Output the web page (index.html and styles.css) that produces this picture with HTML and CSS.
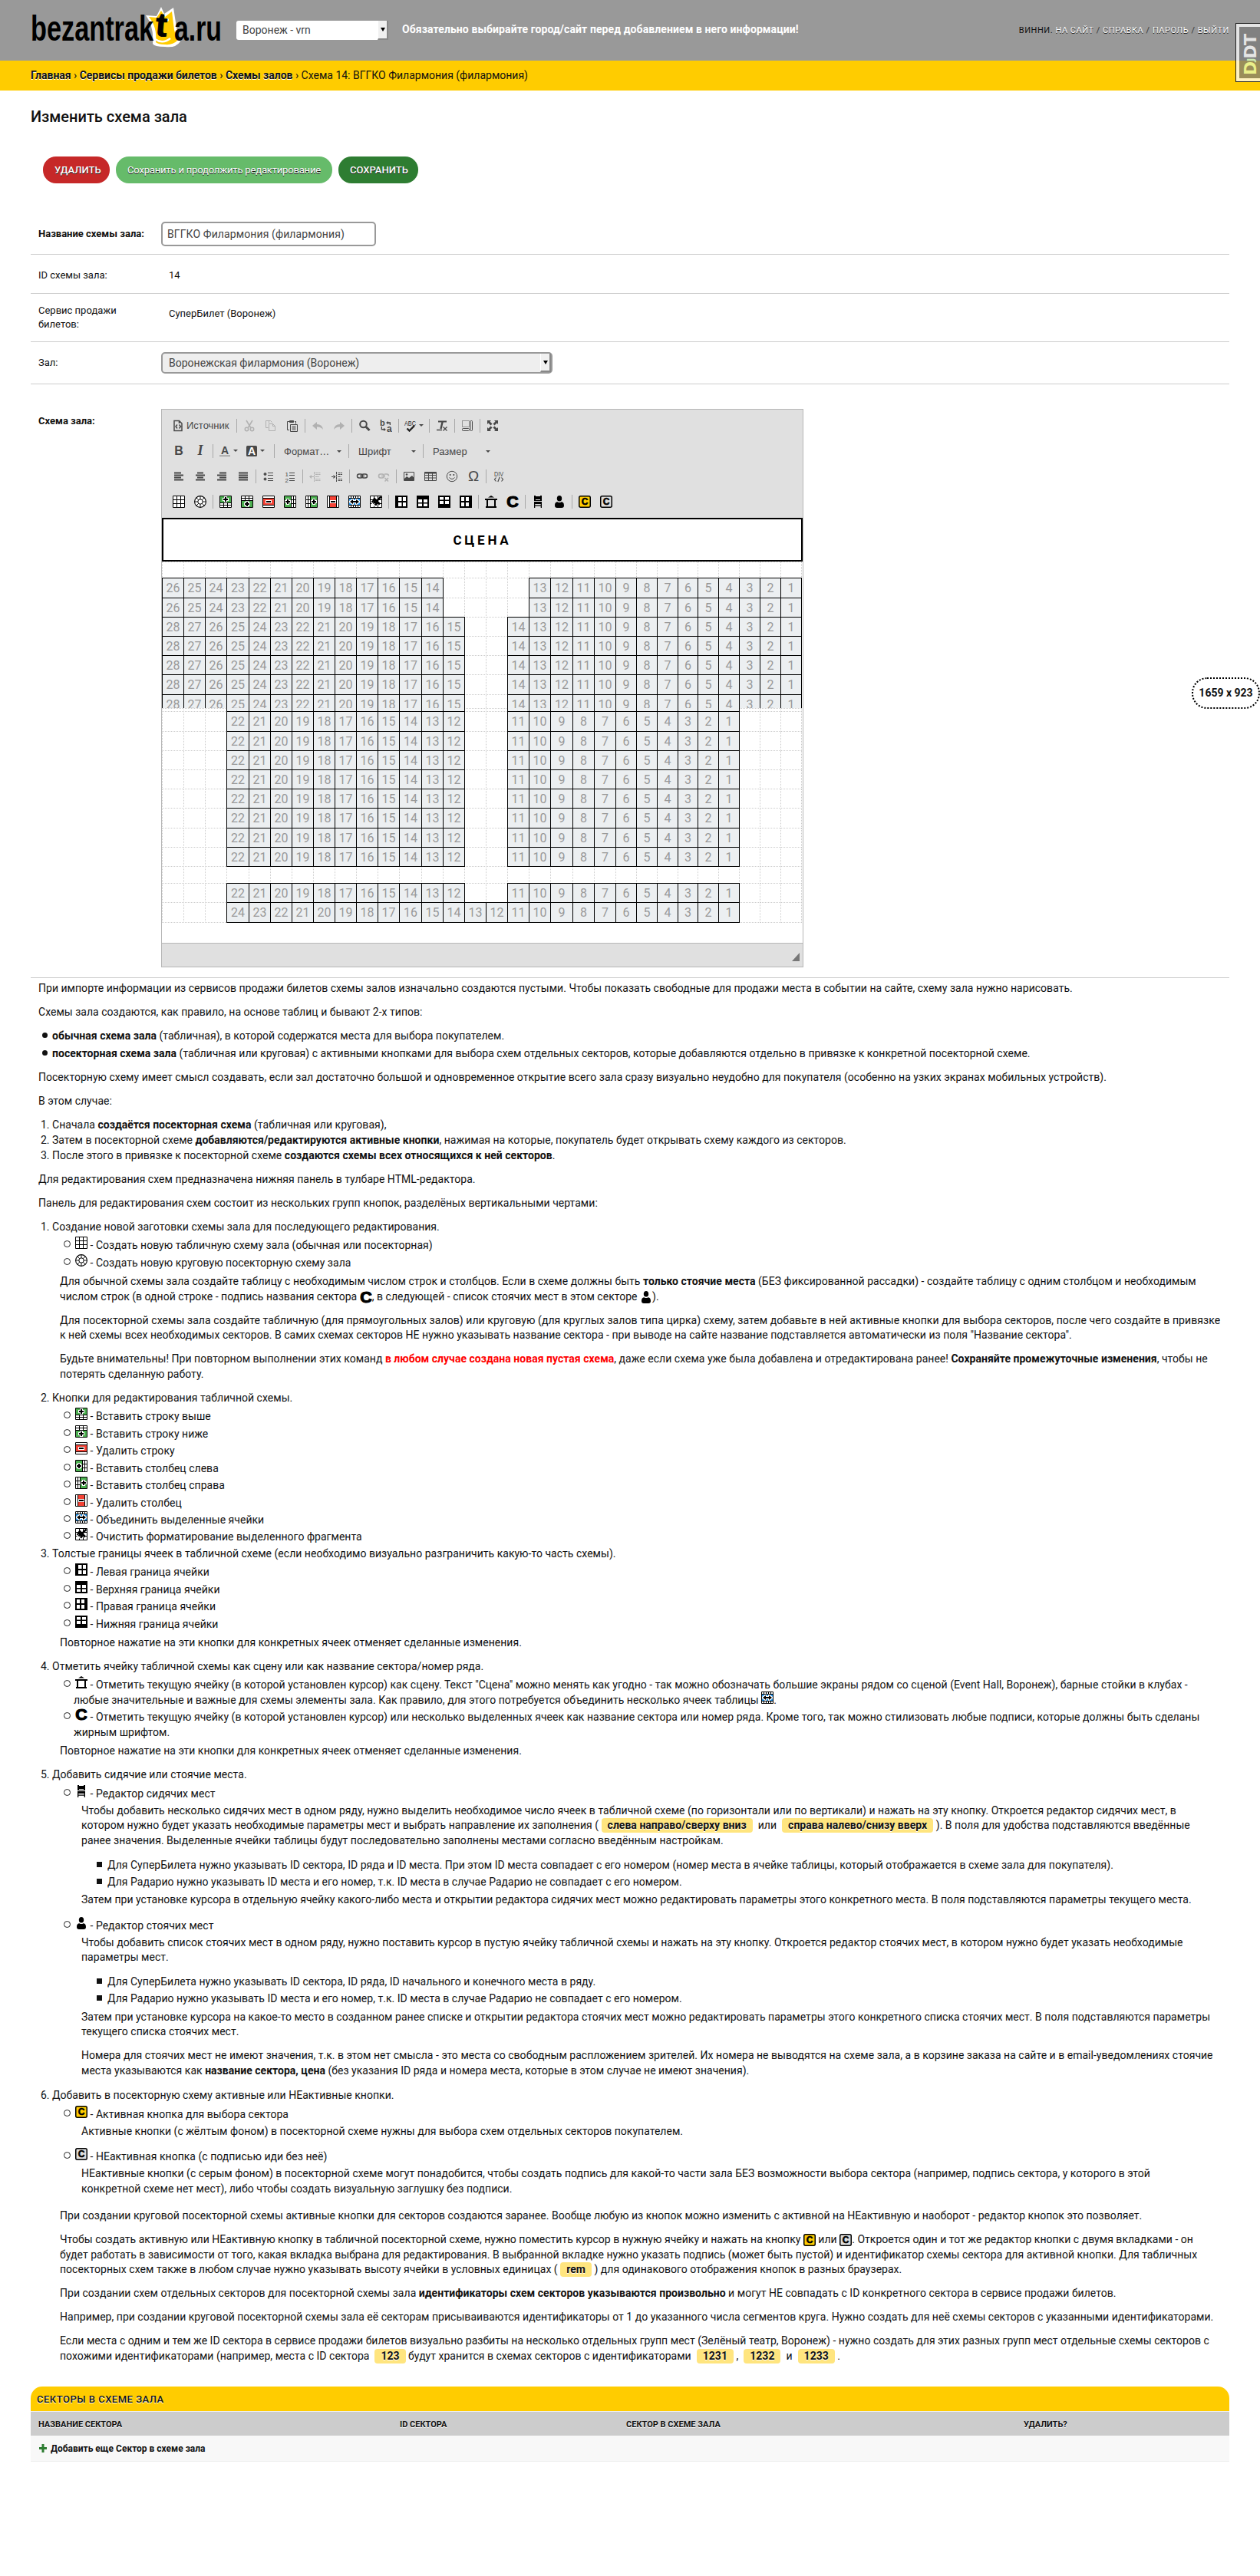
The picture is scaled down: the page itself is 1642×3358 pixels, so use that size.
FILE: index.html
```html
<!DOCTYPE html>
<html lang="ru">
<head>
<meta charset="utf-8">
<title>Изменить схема зала</title>
<link rel="stylesheet" href="styles.css">
</head>
<body>
<svg class="defs" width="0" height="0">
  <symbol id="i-grid" viewBox="0 0 16 16"><path fill="#fff" d="M0 0h16v16H0z"/><path fill="none" stroke="#000" d="M.5.5h15v15H.5zM5.500 0v16M10.500 0v16M0 5.500h16M0 10.500h16"/></symbol>
  <symbol id="i-wheel" viewBox="0 0 16 16"><circle cx="8" cy="8" r="7.400" fill="#fff" stroke="#000" stroke-width="1.100"/><path stroke="#000" stroke-width=".9" d="M8 .5v15M.5 8h15M2.700 2.700l10.600 10.600M13.300 2.700L2.700 13.300"/><circle cx="8" cy="8" r="3.200" fill="#fff" stroke="#000"/></symbol>
  <symbol id="i-row-above" viewBox="0 0 16 16"><path fill="#fff" d="M0 0h16v16H0z"/><path fill="#4caf50" d="M1 1h14v8H1z"/><path fill="none" stroke="#000" d="M.5.5h15v15H.5zM0 9.500h16M0 12.500h16M5.500 10v6M10.500 10v6"/><path stroke="#fff" stroke-width="4" d="M4 5h8M8 1v8"/><path stroke="#000" stroke-width="2" d="M5 5h6M8 2v6"/></symbol>
  <symbol id="i-row-below" viewBox="0 0 16 16"><path fill="#fff" d="M0 0h16v16H0z"/><path fill="#4caf50" d="M1 7h14v8H1z"/><path fill="none" stroke="#000" d="M.5.5h15v15H.5zM0 6.500h16M0 3.500h16M5.500 0v6M10.500 0v6"/><path stroke="#fff" stroke-width="4" d="M4 11h8M8 7v8"/><path stroke="#000" stroke-width="2" d="M5 11h6M8 8v6"/></symbol>
  <symbol id="i-row-del" viewBox="0 0 16 16"><path fill="#fff" d="M0 0h16v16H0z"/><path fill="#f44336" d="M1 3h14v10H1z"/><path fill="none" stroke="#000" d="M.5.5h15v15H.5zM0 3.500h16M0 12.500h16"/><path stroke="#fff" stroke-width="4" d="M4 8h8"/><path stroke="#000" stroke-width="2" d="M5 8h6"/></symbol>
  <symbol id="i-col-left" viewBox="0 0 16 16"><path fill="#fff" d="M0 0h16v16H0z"/><path fill="#4caf50" d="M1 1h8v14H1z"/><path fill="none" stroke="#000" d="M.5.5h15v15H.5zM9.500 0v16M12.500 0v16M10 5.500h6M10 10.500h6"/><path stroke="#fff" stroke-width="4" d="M1 8h8M5 4v8"/><path stroke="#000" stroke-width="2" d="M2 8h6M5 5v6"/></symbol>
  <symbol id="i-col-right" viewBox="0 0 16 16"><path fill="#fff" d="M0 0h16v16H0z"/><path fill="#4caf50" d="M7 1h8v14H7z"/><path fill="none" stroke="#000" d="M.5.5h15v15H.5zM6.500 0v16M3.500 0v16M0 5.500h6M0 10.500h6"/><path stroke="#fff" stroke-width="4" d="M7 8h8M11 4v8"/><path stroke="#000" stroke-width="2" d="M8 8h6M11 5v6"/></symbol>
  <symbol id="i-col-del" viewBox="0 0 16 16"><path fill="#fff" d="M0 0h16v16H0z"/><path fill="#f44336" d="M3 1h10v14H3z"/><path fill="none" stroke="#000" d="M.5.5h15v15H.5zM3.500 0v16M12.500 0v16"/><path stroke="#fff" stroke-width="4" d="M4 8h8"/><path stroke="#000" stroke-width="2" d="M5 8h6"/></symbol>
  <symbol id="i-merge" viewBox="0 0 16 16"><path fill="#fff" d="M0 0h16v16H0z"/><path fill="#2196f3" d="M1 3h14v10H1z"/><path fill="none" stroke="#000" d="M.5.5h15v15H.5zM0 3.500h16M0 12.500h16M3.500 0v3M6.500 0v3M9.500 0v3M12.500 0v3M3.500 13v3M6.500 13v3M9.500 13v3M12.500 13v3"/><path fill="#fff" d="M1 7l4-3h2v2h2V4h2l4 3v2l-4 3H9v-2H7v2H5L1 9z"/><path d="M2 8l4-3v2h4V5l4 3-4 3V9H6v2z"/></symbol>
  <symbol id="i-clear" viewBox="0 0 16 16"><path fill="#fff" d="M0 0h16v16H0z"/><path fill="none" stroke="#000" d="M.5.5h15v15H.5zM5.500 0v16M10.500 0v16M0 5.500h16M0 10.500h16"/><path fill="#fff" d="M4 2L14 12l-1 2-4-3-3 3-4-4 4-5z"/><path stroke="#000" stroke-width="2.500" d="M14.500 1.500L9 7"/><path stroke="#000" stroke-width="3" d="M5 3.500l8 8"/><path d="M5 5l5.500 5.500-2.500 3L1.500 8z"/><path stroke="#fff" d="M4.500 8.500l-1 1M6.500 10l-1 1.500"/></symbol>
  <symbol id="i-b-left" viewBox="0 0 16 16"><path d="M0 0h16v16H0z"/><path fill="#fff" d="M4 2h4.500v5H4zM10 2h4v5h-4zM4 9h4.500v5H4zM10 9h4v5h-4z"/></symbol>
  <symbol id="i-b-top" viewBox="0 0 16 16"><path d="M0 0h16v16H0z"/><path fill="#fff" d="M2 5h5v4H2zM9 5h5v4H9zM2 10.500h5V14H2zM9 10.500h5V14H9z"/></symbol>
  <symbol id="i-b-bottom" viewBox="0 0 16 16"><path d="M0 0h16v16H0z"/><path fill="#fff" d="M2 2h5v3.500H2zM9 2h5v3.500H9zM2 7h5v4H2zM9 7h5v4H9z"/></symbol>
  <symbol id="i-b-right" viewBox="0 0 16 16"><path d="M0 0h16v16H0z"/><path fill="#fff" d="M2 2h4v5H2zM8 2h4v5H8zM2 9h4v5H2zM8 9h4v5H8z"/></symbol>
  <symbol id="i-stage" viewBox="0 0 16 16"><path d="M4 2.500L8 0l4 2.500zM0 4h16v2H0zM2 6h2v8H2zM12 6h2v8h-2zM1 14h14v2H1z"/></symbol>
  <symbol id="i-c" viewBox="0 0 16 16"><text x="8" y="15.300" text-anchor="middle" textLength="15.500" lengthAdjust="spacingAndGlyphs" font-family="Liberation Sans" font-weight="700" font-size="21" stroke="#000" stroke-width="1.200">C</text></symbol>
  <symbol id="i-chair" viewBox="0 0 16 16"><path d="M3 0h2v1h6V0h2v7H3zM3 8h10v3H3zM3 11h1.300v5H3zM11.700 11H13v5h-1.300zM4 12.500h8v1.200H4z"/><path fill="#e0e0e0" d="M5 5h6v1H5z"/></symbol>
  <symbol id="i-man" viewBox="0 0 16 16"><ellipse cx="8" cy="3.800" rx="3.200" ry="3.800"/><path d="M2 13c0-4 2-4.800 3.500-4.800Q8 10 10.500 8.200C12 8.200 14 9 14 13q0 3-3 3H5q-3 0-3-3z"/></symbol>
  <symbol id="i-act" viewBox="0 0 16 16"><rect x=".75" y=".75" width="14.500" height="14.500" rx="2" fill="#fc0" stroke="#000" stroke-width="1.500"/><text x="8" y="12.300" text-anchor="middle" font-family="Liberation Sans" font-weight="700" font-size="12" stroke="#000" stroke-width=".6">C</text></symbol>
  <symbol id="i-inact" viewBox="0 0 16 16"><rect x=".75" y=".75" width="14.500" height="14.500" rx="2" fill="#ddd" stroke="#000" stroke-width="1.500"/><text x="8" y="12.300" text-anchor="middle" font-family="Liberation Sans" font-weight="700" font-size="12" stroke="#000" stroke-width=".6">C</text></symbol>
</svg>

<header class="header">
  <svg class="logo" width="252" height="54" viewBox="0 0 252 54">
    <path d="M150 12l14 1 6-12 4 9 12-8 4 26 5 18q-6 9-20 7-14 0-16-4 2-22-9-37z" fill="#fff"/>
    <path d="M154 14l10 1 6-9 5 8 9-7 3 24 4 14q-6 6-16 5-9 0-12-3 2-20-9-33z" fill="#fc0"/>
    <path d="M162 43q10 7 20-1" fill="none" stroke="#fff" stroke-width="2.500"/>
    <circle cx="178" cy="18" r="2" fill="#fff"/>
    <g font-family="Liberation Sans" font-weight="700" font-size="47">
      <text x="0" y="44.500" textLength="160" lengthAdjust="spacingAndGlyphs">bezantrak</text>
      <text x="163" y="39" font-size="43" textLength="15" lengthAdjust="spacingAndGlyphs" transform="rotate(5 170 25)" stroke="#000" stroke-width="1">t</text>
      <text x="187" y="44.500" textLength="62" lengthAdjust="spacingAndGlyphs">a.ru</text>
    </g>
  </svg>
  <div class="city-select"><span>Воронеж - vrn</span><i class="drop"></i></div>
  <strong class="notice">Обязательно выбирайте город/сайт перед добавлением в него информации!</strong>
  <nav class="user-tools"><span>Винни.</span> <a>На сайт</a> / <a>Справка</a> / <a>Пароль</a> / <a>Выйти</a></nav>
</header>
<div class="debug-handle"><span><b class="d1">D</b><b class="j">J</b>DT</span></div>
<div class="viewport-size">1659 x 923</div>
<div class="breadcrumbs"><span><b>Главная</b> › <b>Сервисы продажи билетов</b> › <b>Схемы залов</b> › Схема 14: ВГГКО Филармония (филармония)</span></div>

<main class="content">
  <h1>Изменить схема зала</h1>
  <div class="submit-row">
    <a class="btn del">Удалить</a><a class="btn cont">Сохранить и продолжить редактирование</a><a class="btn save">Сохранить</a>
  </div>

  <div class="row r1"><label class="req">Название схемы зала:</label><div class="input">ВГГКО Филармония (филармония)</div></div>
  <div class="row r2"><label>ID схемы зала:</label><p>14</p></div>
  <div class="row r3"><label>Сервис продажи билетов:</label><p>СуперБилет (Воронеж)</p></div>
  <div class="row r4"><label>Зал:</label><div class="hall-select"><span>Воронежская филармония (Воронеж)</span><i class="drop"></i></div></div>
  <div class="row r5"><label class="req">Схема зала:</label>
    <div class="editor">
      <div class="toolbar">
        <div class="bar">
          <span class="tb source"><svg width="16" height="16" viewBox="0 0 16 16" fill="none" stroke="#484848" stroke-width="1.500"><path d="M3 1.500h6.500L13 5v9.500H3zM9.500 1.500V5M7 6.500L5 9l2 2.500M9.500 6.500l2 2.500-2 2.500"/></svg>Источник</span>
          <i class="sep"></i>
          <span class="tb off"><svg width="16" height="16" viewBox="0 0 16 16" fill="none" stroke="#484848" stroke-width="1.500"><path d="M4 1l6 10M12 1L6 11"/><circle cx="4.500" cy="12.500" r="2.200"/><circle cx="11.500" cy="12.500" r="2.200"/></svg></span>
          <span class="tb off"><svg width="16" height="16" viewBox="0 0 16 16" fill="none" stroke="#484848"><path d="M5.500 4.500V1.500h-4v9h3M5.500 5.500h5l3 3v6h-8zM10.500 5.500v3h3M1.500 1.500h6l2 2"/></svg></span>
          <span class="tb"><svg width="16" height="16" viewBox="0 0 16 16" fill="none" stroke="#484848"><path d="M4 13.500H1.500v-11H4M11 2.500h1.500v3M5.500 6.500h9v9h-9zM7.500 9h5M7.500 11h5M7.500 13h5"/><path fill="#484848" d="M4.500 1.500h5v2h-5z"/></svg></span>
          <i class="sep"></i>
          <span class="tb off"><svg width="16" height="16" viewBox="0 0 16 16" fill="#484848"><path d="M1 8l6-5v3q7 0 8 7-3-4-8-3.500V13z"/></svg></span>
          <span class="tb off"><svg width="16" height="16" viewBox="0 0 16 16" fill="#484848"><path d="M15 8L9 3v3q-7 0-8 7 3-4 8-3.500V13z"/></svg></span>
          <i class="sep"></i>
          <span class="tb"><svg width="16" height="16" viewBox="0 0 16 16" fill="none" stroke="#484848"><circle cx="6.500" cy="6" r="4.300" stroke-width="2"/><path stroke-width="3" d="M10 9.500l4.500 4.500"/></svg></span>
          <span class="tb"><svg width="16" height="16" viewBox="0 0 16 16" fill="#484848"><text x="0" y="8" font-family="Liberation Sans" font-weight="700" font-size="11">b</text><text x="9" y="15.500" font-family="Liberation Sans" font-weight="700" font-size="12">a</text><path d="M8 4l3-2v1.300h3V7h-1.300V5H11v1.300zM8 13l-3-2.300V12H3V9H1.700v4.500H5V15z"/></svg></span>
          <i class="sep"></i>
          <span class="tb wide"><svg width="16" height="16" viewBox="0 0 16 16" fill="#222"><text x="0" y="7.500" textLength="15" lengthAdjust="spacingAndGlyphs" font-family="Liberation Sans" font-size="9.500">ABC</text><path fill="none" stroke="#222" stroke-width="2.400" d="M3.500 11.500l3 3L13 8"/></svg><i class="arr"></i></span>
          <i class="sep"></i>
          <span class="tb"><svg width="16" height="16" viewBox="0 0 16 16" fill="#484848" stroke="#484848"><path fill="none" stroke-width="2" d="M3 2.500h11"/><path fill="none" stroke-width="2.400" d="M8.700 2.500L6.500 12"/><path fill="none" d="M1 13.500h7M9.500 9.500l5 5M14.500 9.500l-5 5" stroke-width="1.300"/></svg></span>
          <i class="sep"></i>
          <span class="tb"><svg width="16" height="16" viewBox="0 0 16 16" fill="none" stroke="#484848"><path stroke-dasharray="1 1" d="M1.500 1.500h9v8h-9z"/><rect x="12" y="1.500" width="2.500" height="13" rx="1"/><rect x="1.500" y="11.500" width="9" height="3" rx="1"/></svg></span>
          <i class="sep"></i>
          <span class="tb"><svg width="16" height="16" viewBox="0 0 16 16" fill="#484848"><path d="M1 1h5L4.500 2.500l3 3-2 2-3-3L1 6zM15 1v5l-1.500-1.500-3 3-2-2 3-3L10 1zM1 15v-5l1.500 1.500 3-3 2 2-3 3L6 15zM15 15h-5l1.500-1.500-3-3 2-2 3 3L15 10z"/></svg></span>
        </div>
        <div class="bar">
          <span class="tb glyph">B</span><span class="tb glyph it">I</span><i class="sep"></i>
          <span class="tb wide"><svg width="16" height="16" viewBox="0 0 16 16" fill="#484848"><text x="8" y="11.500" text-anchor="middle" font-family="Liberation Sans" font-weight="700" font-size="14">A</text><path fill="#999" d="M1 13.500h14v1.500H1z"/></svg><i class="arr"></i></span>
          <span class="tb wide"><svg width="16" height="16" viewBox="0 0 16 16" fill="#484848"><rect x="1" y="1" width="14" height="14" rx="1.500"/><text x="8" y="13" text-anchor="middle" font-family="Liberation Sans" font-weight="700" font-size="14" fill="#fff">A</text></svg><i class="arr"></i></span>
          <i class="sep late"></i>
          <span class="combo">Формат…<i class="arr"></i></span><i class="sep"></i>
          <span class="combo">Шрифт<i class="arr"></i></span><i class="sep"></i>
          <span class="combo">Размер<i class="arr"></i></span>
        </div>
        <div class="bar">
          <span class="tb"><svg width="16" height="16" viewBox="0 0 16 16" stroke="#484848"><path d="M2 3.500h9M2 6.500h12M2 9.500h9M2 12.500h12" stroke-width="2"/></svg></span>
          <span class="tb"><svg width="16" height="16" viewBox="0 0 16 16" stroke="#484848"><path d="M4 3.500h8M2 6.500h12M4 9.500h8M2 12.500h12" stroke-width="2"/></svg></span>
          <span class="tb"><svg width="16" height="16" viewBox="0 0 16 16" stroke="#484848"><path d="M5 3.500h9M2 6.500h12M5 9.500h9M2 12.500h12" stroke-width="2"/></svg></span>
          <span class="tb"><svg width="16" height="16" viewBox="0 0 16 16" stroke="#484848"><path d="M2 3.500h12M2 6.500h12M2 9.500h12M2 12.500h12" stroke-width="2"/></svg></span>
          <i class="sep"></i>
          <span class="tb"><svg width="16" height="16" viewBox="0 0 16 16" fill="#484848" stroke="#484848"><circle cx="3.500" cy="5" r="1.500"/><circle cx="3.500" cy="11.500" r="1.500"/><path d="M7 3.500h7M7 6.500h7M7 10.500h7M7 13.500h7"/></svg></span>
          <span class="tb"><svg width="16" height="16" viewBox="0 0 16 16" fill="#484848"><text x="1.500" y="8" font-family="Liberation Sans" font-size="8">1</text><text x="1.500" y="15.500" font-family="Liberation Sans" font-size="8">2</text><path stroke="#484848" d="M7 3.500h7M7 6.500h7M7 10.500h7M7 13.500h7"/></svg></span>
          <i class="sep"></i>
          <span class="tb off"><svg width="16" height="16" viewBox="0 0 16 16" fill="#484848" stroke="#484848"><path d="M8 3.500h7M8 5.500h7M8 8.500h5M8 11.500h7M8 13.500h7M6.500 2v13" stroke-dasharray="3 .5"/><path stroke="none" d="M0 8.500L3 6v5zM3 8h3v1H3z"/></svg></span>
          <span class="tb"><svg width="16" height="16" viewBox="0 0 16 16" fill="#484848" stroke="#484848"><path d="M9.500 3.500H15M9.500 5.500H15M9.500 8.500h4M9.500 11.500H15M9.500 13.500H15M7.500 2v13" stroke-dasharray="3 .5"/><path stroke="none" d="M6.500 8.500L3.500 6v5zM1 8h3v1H1z"/></svg></span>
          <i class="sep"></i>
          <span class="tb"><svg width="16" height="16" viewBox="0 0 16 16" fill="none" stroke="#484848" stroke-width="1.500"><rect x="1.500" y="5" width="7" height="5" rx="2.500"/><rect x="7.500" y="5" width="7" height="5" rx="2.500"/><path d="M5 7.500h6"/></svg></span>
          <span class="tb off"><svg width="16" height="16" viewBox="0 0 16 16" fill="none" stroke="#484848" stroke-width="1.500"><rect x="1.500" y="5" width="7" height="5" rx="2.500"/><path d="M9 5h3q2.500 0 2.500 2.500M5 7.500h5M9.500 10l4.500 4.500M14 10l-4.500 4.500"/></svg></span>
          <i class="sep"></i>
          <span class="tb"><svg width="16" height="16" viewBox="0 0 16 16" fill="#484848"><path fill="none" stroke="#484848" d="M1.500 2.500h13v11h-13z"/><circle cx="5" cy="5.500" r="1.300"/><path d="M2 13v-2l3-3 3 2 4-3 2.500 3v3z"/></svg></span>
          <span class="tb"><svg width="16" height="16" viewBox="0 0 16 16" fill="none" stroke="#484848"><path d="M.5 2.500h15v11H.500zM0 6.500h16M0 10h16M5.500 4v10M10.500 4v10"/><path stroke-width="2" d="M0 3.500h16"/></svg></span>
          <span class="tb"><svg width="16" height="16" viewBox="0 0 16 16" fill="#484848"><circle cx="8" cy="8" r="6.700" fill="none" stroke="#484848"/><circle cx="5.700" cy="6" r="1.100"/><circle cx="10.300" cy="6" r="1.100"/><path fill="none" stroke="#484848" d="M4.500 9.500q3.500 4 7 0"/></svg></span>
          <span class="tb glyph om">Ω</span>
          <i class="sep"></i>
          <span class="tb"><svg width="16" height="16" viewBox="0 0 16 16" fill="#484848"><text x="2" y="8" textLength="12" lengthAdjust="spacingAndGlyphs" font-family="Liberation Sans" font-size="9">DIV</text><path fill="none" stroke="#484848" stroke-width="1.200" d="M4.500 9.500L2.500 12l2 2.500M11.500 9.500l2 2.500-2 2.500M9.200 9l-2.400 6"/></svg></span>
        </div>
        <div class="bar">
          <span class="tb"><svg class="ic"><use href="#i-grid"/></svg></span><span class="tb"><svg class="ic"><use href="#i-wheel"/></svg></span><i class="sep"></i>
          <span class="tb"><svg class="ic"><use href="#i-row-above"/></svg></span><span class="tb"><svg class="ic"><use href="#i-row-below"/></svg></span><span class="tb"><svg class="ic"><use href="#i-row-del"/></svg></span><span class="tb"><svg class="ic"><use href="#i-col-left"/></svg></span><span class="tb"><svg class="ic"><use href="#i-col-right"/></svg></span><span class="tb"><svg class="ic"><use href="#i-col-del"/></svg></span><span class="tb"><svg class="ic"><use href="#i-merge"/></svg></span><span class="tb"><svg class="ic"><use href="#i-clear"/></svg></span><i class="sep"></i>
          <span class="tb"><svg class="ic"><use href="#i-b-left"/></svg></span><span class="tb"><svg class="ic"><use href="#i-b-top"/></svg></span><span class="tb"><svg class="ic"><use href="#i-b-bottom"/></svg></span><span class="tb"><svg class="ic"><use href="#i-b-right"/></svg></span><i class="sep"></i>
          <span class="tb"><svg class="ic"><use href="#i-stage"/></svg></span><span class="tb"><svg class="ic"><use href="#i-c"/></svg></span><i class="sep"></i>
          <span class="tb"><svg class="ic"><use href="#i-chair"/></svg></span><span class="tb"><svg class="ic"><use href="#i-man"/></svg></span><i class="sep"></i>
          <span class="tb"><svg class="ic"><use href="#i-act"/></svg></span><span class="tb"><svg class="ic"><use href="#i-inact"/></svg></span>
        </div>
      </div>
      <div class="canvas">
        <div class="stage">СЦЕНА</div>
        <div id="hall"></div>
      </div>
      <div class="resizer"><i></i></div>
    </div>
  </div>

  <div class="help">
    <p>При импорте информации из сервисов продажи билетов схемы залов изначально создаются пустыми. Чтобы показать свободные для продажи места в событии на сайте, схему зала нужно нарисовать.</p>
    <p>Схемы зала создаются, как правило, на основе таблиц и бывают 2-х типов:</p>
    <ul class="disc">
      <li><b>обычная схема зала</b> (табличная), в которой содержатся места для выбора покупателем.</li>
      <li><b>посекторная схема зала</b> (табличная или круговая) с активными кнопками для выбора схем отдельных секторов, которые добавляются отдельно в привязке к конкретной посекторной схеме.</li>
    </ul>
    <p>Посекторную схему имеет смысл создавать, если зал достаточно большой и одновременное открытие всего зала сразу визуально неудобно для покупателя (особенно на узких экранах мобильных устройств).</p>
    <p>В этом случае:</p>
    <ol class="steps">
      <li>Сначала <b>создаётся посекторная схема</b> (табличная или круговая),</li>
      <li>Затем в посекторной схеме <b>добавляются/редактируются активные кнопки</b>, нажимая на которые, покупатель будет открывать схему каждого из секторов.</li>
      <li>После этого в привязке к посекторной схеме <b>создаются схемы всех относящихся к ней секторов</b>.</li>
    </ol>
    <p>Для редактирования схем предназначена нижняя панель в тулбаре HTML-редактора.</p>
    <p>Панель для редактирования схем состоит из нескольких групп кнопок, разделёных вертикальными чертами:</p>
    <ol>
      <li>Создание новой заготовки схемы зала для последующего редактирования.
        <ul class="ring">
          <li><svg class="ic"><use href="#i-grid"/></svg> - Создать новую табличную схему зала (обычная или посекторная)</li>
          <li><svg class="ic"><use href="#i-wheel"/></svg> - Создать новую круговую посекторную схему зала</li>
        </ul>
        <p class="after">Для обычной схемы зала создайте таблицу с необходимым числом строк и столбцов. Если в схеме должны быть <b>только стоячие места</b> (БЕЗ фиксированной рассадки) - создайте таблицу с одним столбцом и необходимым<br>числом строк (в одной строке - подпись названия сектора <svg class="ic low"><use href="#i-c"/></svg>, в следующей - список стоячих мест в этом секторе <svg class="ic low"><use href="#i-man"/></svg>).</p>
        <p><span class="loose">Для посекторной схемы зала создайте табличную (для прямоугольных залов) или круговую (для круглых залов типа цирка) схему, затем добавьте в ней активные кнопки для выбора секторов, после чего создайте в привязке</span><br>к ней схемы всех необходимых секторов. В самих схемах секторов НЕ нужно указывать название сектора - при выводе на сайте название подставляется автоматически из поля "Название сектора".</p>
        <p class="end">Будьте внимательны! При повторном выполнении этих команд <b class="red">в любом случае создана новая пустая схема</b>, даже если схема уже была добавлена и отредактирована ранее! <b>Сохраняйте промежуточные изменения</b>, чтобы не<br>потерять сделанную работу.</p>
      </li>
      <li>Кнопки для редактирования табличной схемы.
        <ul class="ring">
          <li><svg class="ic"><use href="#i-row-above"/></svg> - Вставить строку выше</li>
          <li><svg class="ic"><use href="#i-row-below"/></svg> - Вставить строку ниже</li>
          <li><svg class="ic"><use href="#i-row-del"/></svg> - Удалить строку</li>
          <li><svg class="ic"><use href="#i-col-left"/></svg> - Вставить столбец слева</li>
          <li><svg class="ic"><use href="#i-col-right"/></svg> - Вставить столбец справа</li>
          <li><svg class="ic"><use href="#i-col-del"/></svg> - Удалить столбец</li>
          <li><svg class="ic"><use href="#i-merge"/></svg> - Объединить выделенные ячейки</li>
          <li><svg class="ic"><use href="#i-clear"/></svg> - Очистить форматирование выделенного фрагмента</li>
        </ul>
      </li>
      <li>Толстые границы ячеек в табличной схеме (если необходимо визуально разграничить какую-то часть схемы).
        <ul class="ring">
          <li><svg class="ic"><use href="#i-b-left"/></svg> - Левая граница ячейки</li>
          <li><svg class="ic"><use href="#i-b-top"/></svg> - Верхняя граница ячейки</li>
          <li><svg class="ic"><use href="#i-b-right"/></svg> - Правая граница ячейки</li>
          <li><svg class="ic"><use href="#i-b-bottom"/></svg> - Нижняя граница ячейки</li>
        </ul>
        <p class="after end">Повторное нажатие на эти кнопки для конкретных ячеек отменяет сделанные изменения.</p>
      </li>
      <li>Отметить ячейку табличной схемы как сцену или как название сектора/номер ряда.
        <ul class="ring">
          <li><svg class="ic"><use href="#i-stage"/></svg> - Отметить текущую ячейку (в которой установлен курсор) как сцену. Текст "Сцена" можно менять как угодно - так можно обозначать большие экраны рядом со сценой (Event Hall, Воронеж), барные стойки в клубах -<br>любые значительные и важные для схемы элементы зала. Как правило, для этого потребуется объединить несколько ячеек таблицы <svg class="ic"><use href="#i-merge"/></svg>.</li>
          <li><svg class="ic"><use href="#i-c"/></svg> - Отметить текущую ячейку (в которой установлен курсор) или несколько выделенных ячеек как название сектора или номер ряда. Кроме того, так можно стилизовать любые подписи, которые должны быть сделаны<br>жирным шрифтом.</li>
        </ul>
        <p class="after end">Повторное нажатие на эти кнопки для конкретных ячеек отменяет сделанные изменения.</p>
      </li>
      <li>Добавить сидячие или стоячие места.
        <ul class="ring">
          <li><svg class="ic"><use href="#i-chair"/></svg> - Редактор сидячих мест
            <p class="first">Чтобы добавить несколько сидячих мест в одном ряду, нужно выделить необходимое число ячеек в табличной схеме (по горизонтали или по вертикали) и нажать на эту кнопку. Откроется редактор сидячих мест, в<br>котором нужно будет указать необходимые параметры мест и выбрать направление их заполнения ( <code>слева направо/сверху вниз</code> &nbsp;или &nbsp;<code>справа налево/снизу вверх</code> ). В поля для удобства подставляются введённые<br>ранее значения. Выделенные ячейки таблицы будут последовательно заполнены местами согласно введённым настройкам.</p>
            <ul class="sq">
              <li>Для СуперБилета нужно указывать ID сектора, ID ряда и ID места. При этом ID места совпадает с его номером (номер места в ячейке таблицы, который отображается в схеме зала для покупателя).</li>
              <li>Для Радарио нужно указывать ID места и его номер, т.к. ID места в случае Радарио не совпадает с его номером.</li>
            </ul>
            <p class="sub end">Затем при установке курсора в отдельную ячейку какого-либо места и открытии редактора сидячих мест можно редактировать параметры этого конкретного места. В поля подставляются параметры текущего места.</p>
          </li>
          <li><svg class="ic"><use href="#i-man"/></svg> - Редактор стоячих мест
            <p class="first">Чтобы добавить список стоячих мест в одном ряду, нужно поставить курсор в пустую ячейку табличной схемы и нажать на эту кнопку. Откроется редактор стоячих мест, в котором нужно будет указать необходимые<br>параметры мест.</p>
            <ul class="sq">
              <li>Для СуперБилета нужно указывать ID сектора, ID ряда, ID начального и конечного места в ряду.</li>
              <li>Для Радарио нужно указывать ID места и его номер, т.к. ID места в случае Радарио не совпадает с его номером.</li>
            </ul>
            <p class="sub">Затем при установке курсора на какое-то место в созданном ранее списке и открытии редактора стоячих мест можно редактировать параметры этого конкретного списка стоячих мест. В поля подставляются параметры<br>текущего списка стоячих мест.</p>
            <p class="sub end">Номера для стоячих мест не имеют значения, т.к. в этом нет смысла - это места со свободным распложением зрителей. Их номера не выводятся на схеме зала, а в корзине заказа на сайте и в email-уведомлениях стоячие<br>места указываются как <b>название сектора, цена</b> (без указания ID ряда и номера места, которые в этом случае не имеют значения).</p>
          </li>
        </ul>
      </li>
      <li>Добавить в посекторную схему активные или НЕактивные кнопки.
        <ul class="ring">
          <li><svg class="ic"><use href="#i-act"/></svg> - Активная кнопка для выбора сектора
            <p class="first end">Активные кнопки (с жёлтым фоном) в посекторной схеме нужны для выбора схем отдельных секторов покупателем.</p>
          </li>
          <li><svg class="ic"><use href="#i-inact"/></svg> - НЕактивная кнопка (с подписью иди без неё)
            <p class="first end">НЕактивные кнопки (с серым фоном) в посекторной схеме могут понадобится, чтобы создать подпись для какой-то части зала БЕЗ возможности выбора сектора (например, подпись сектора, у которого в этой<br>конкретной схеме нет мест), либо чтобы создать визуальную заглушку без подписи.</p>
          </li>
        </ul>
        <p class="after">При создании круговой посекторной схемы активные кнопки для секторов создаются заранее. Вообще любую из кнопок можно изменить с активной на НЕактивную и наоборот - редактор кнопок это позволяет.</p>
        <p>Чтобы создать активную или НЕактивную кнопку в табличной посекторной схеме, нужно поместить курсор в нужную ячейку и нажать на кнопку <svg class="ic low"><use href="#i-act"/></svg> или <svg class="ic low"><use href="#i-inact"/></svg>. Откроется один и тот же редактор кнопки с двумя вкладками - он<br>будет работать в зависимости от того, какая вкладка выбрана для редактирования. В выбранной вкладке нужно указать подпись (может быть пустой) и идентификатор схемы сектора для активной кнопки. Для табличных<br>посекторных схем также в любом случае нужно указывать высоту ячейки в условных единицах ( <code>rem</code> ) для одинакового отображения кнопок в разных браузерах.</p>
        <p>При создании схем отдельных секторов для посекторной схемы зала <b>идентификаторы схем секторов указываются произвольно</b> и могут НЕ совпадать с ID конкретного сектора в сервисе продажи билетов.</p>
        <p>Например, при создании круговой посекторной схемы зала её секторам присываиваются идентификаторы от 1 до указанного числа сегментов круга. Нужно создать для неё схемы секторов с указанными идентификаторами.</p>
        <p>Если места с одним и тем же ID сектора в сервисе продажи билетов визуально разбиты на несколько отдельных групп мест (Зелёный театр, Воронеж) - нужно создать для этих разных групп мест отдельные схемы секторов с<br>похожими идентификаторами (например, места с ID сектора &nbsp;<code>123</code> будут хранится в схемах секторов с идентификаторами &nbsp;<code>1231</code> , &nbsp;<code>1232</code> &nbsp;и &nbsp;<code>1233</code> .</p>
      </li>
    </ol>
  </div>

  <section class="inline-group">
    <h2>Секторы в схеме зала</h2>
    <div class="thead"><span>Название сектора</span><span>ID сектора</span><span>Сектор в схеме зала</span><span>Удалить?</span></div>
    <div class="add"><svg width="10" height="11" viewBox="0 0 10 11"><path fill="#2e7d32" d="M3.500 0h3v4H10v3H6.500v4h-3V7H0V4h3.500z"/></svg>Добавить еще Сектор в схеме зала</div>
  </section>
</main>
<script src="hall.js"></script>
</body>
</html>
```
FILE: styles.css
```css
* { box-sizing: border-box; }
body { margin: 0; min-height: 3358px; background: #fff; color: #111; font-family: Roboto, sans-serif; font-size: 14px; position: relative; overflow-x: hidden; }
.defs { display: none; }
b, strong { font-weight: 700; }

.header { display: flex; align-items: center; height: 79px; padding: 0 40px; background: #999; }
.logo { margin-top: -10px; flex: none; }
.city-select, .hall-select { display: flex; justify-content: space-between; background: #fff; color: #444; }
.city-select { width: 198px; height: 25px; margin-left: 16px; border-radius: 3px; line-height: 25px; font-size: 14px; padding-left: 8px; }
.drop { width: 14px; background: #f0f0f0; border-right: 2px solid #888; border-bottom: 2px solid #888; border-left: 1px solid #fff; display: flex; align-items: center; justify-content: center; }
.drop::after { content: ""; border: 3px solid transparent; border-top: 5px solid #000; border-bottom: 0; }
.notice { margin-left: 18px; color: #fff; font-size: 14px; line-height: 20px; margin-top: -3px; letter-spacing: .09px; white-space: nowrap; }
.user-tools { margin-left: auto; font-size: 11px; letter-spacing: .53px; text-transform: uppercase; color: #333; white-space: nowrap; }
.user-tools span { color: #111; }
.user-tools a { color: #fff; text-shadow: 0 1px 0 #111; }
.debug-handle { position: absolute; right: 0; top: 30px; width: 32px; height: 77px; border: 1px solid #222; border-right: 0; }
.debug-handle::before { content: ""; position: absolute; inset: 0; border: 4px solid rgba(255,255,255,.75); border-right: 0; background: rgba(120,120,120,.74); background-clip: padding-box; }
.debug-handle span { position: absolute; left: 7px; top: 11px; height: 56px; writing-mode: vertical-rl; transform: rotate(180deg); font: 700 22px/24px "DejaVu Sans", sans-serif; letter-spacing: -.8px; color: #e4e4e4; }
.debug-handle .d1 { color: #eaf08a; }
.debug-handle .j { color: #cbe8b0; font-size: 13px; }
.viewport-size { position: absolute; left: 1553px; top: 883px; width: 89px; height: 41px; border: 2px dotted #000; border-radius: 20px; background: #fff; font-weight: 700; text-align: center; line-height: 37px; white-space: nowrap; }
.breadcrumbs { height: 39px; padding: 0 40px; background: #fc0; line-height: 39px; font-size: 14px; }
.breadcrumbs b { text-shadow: 0 1px 0 #fff; letter-spacing: -.03px; }

.content { padding: 0 40px; }
h1 { margin: 22px 0 0; font-size: 20px; line-height: 24px; font-weight: 500; }
.submit-row { display: flex; gap: 8px; padding: 40px 16px 32px; }
.btn { height: 35px; line-height: 36px; border-radius: 17px; padding: 0 15px; color: #fff; font-size: 13px; text-shadow: 0 1px 0 #111; white-space: nowrap; }
.del { background: #c62828; width: 87px; text-transform: uppercase; font-weight: 500; }
.cont { background: #66bb6a; width: 282px; letter-spacing: -.17px; }
.save { background: #2e7d32; width: 104px; text-transform: uppercase; font-weight: 500; }

.row { display: flex; align-items: flex-start; padding-left: 10px; border-bottom: 1px solid #ccc; font-size: 13px; }
.row label { width: 160px; flex: none; line-height: 18px; padding-right: 40px; }
.row label.req { font-weight: 700; padding-right: 0; white-space: nowrap; }
.row p { margin: 0 0 0 10px; line-height: 18px; }
.r1 { height: 61px; padding-top: 18px; }
.r1 label { padding-top: 7px; }
.input { width: 280px; height: 32px; border: 2px solid #999; border-radius: 5px; line-height: 28px; padding-left: 6px; font-size: 14px; letter-spacing: .1px; color: #444; }
.r2 { height: 51px; padding-top: 18px; }
.r3 { height: 63px; padding-top: 13px; }
.r3 p { padding-top: 4px; }
.r4 { height: 55px; padding-top: 13px; }
.r4 label { padding-top: 5px; }
.hall-select { width: 510px; height: 28px; border: 2px solid #999; border-radius: 5px; background: #eee; line-height: 25px; font-size: 14px; padding-left: 8px; }
.r5 { height: 774px; padding-top: 32px; }
.r5 label { padding-top: 7px; }

.editor { width: 837px; height: 728px; border: 1px solid #b6b6b6; display: flex; flex-direction: column; }
.toolbar { height: 141px; flex: none; background: #e0e0e0; padding: 4px 0 0 8px; font-family: "Liberation Sans", sans-serif; color: #484848; }
.bar { display: flex; height: 33px; align-items: center; }
.tb { width: 28px; height: 24px; display: flex; align-items: center; justify-content: center; flex: none; }
.tb.source { width: 87px; gap: 3px; font-size: 13px; justify-content: flex-start; padding-left: 5px; }
.tb.off { opacity: .3; }
.tb.wide { width: 35px; gap: 3px; }
.sep { width: 1px; height: 18px; margin: 0 2px; background: #a8a8a8; flex: none; }
.sep.late { margin-left: 7px; }
.arr { border: 3px solid transparent; border-top-color: #484848; border-bottom: 0; flex: none; }
.combo { width: 92px; display: flex; justify-content: space-between; align-items: center; padding: 2px 7px 0 10px; font-size: 13px; }
.glyph { font-weight: 700; font-size: 16px; }
.glyph.it { font-family: "Liberation Serif", serif; font-style: italic; font-size: 18px; }
.glyph.om { font-size: 19px; font-weight: 400; }
.ic { width: 16px; height: 16px; }

.canvas { flex: 1; background: #fff; overflow: hidden; }
.stage { height: 57px; border: 2px solid #000; font-weight: 700; font-size: 17px; letter-spacing: 3.800px; text-align: center; line-height: 55px; color: #000; position: relative; }
.hr { display: grid; grid-template-columns: 28px 28px 28px 29px 28px 28px 28px 28px 28px 28px 28px 29px 28px 28px 28px 28px 28px 28px 29px 28px 28px 27px 27px 27px 26px 27px 27px 27px 27px 27px; }
.hr i { font-style: normal; margin: 0 -1px -1px 0; border: 1px dotted #ccc; }
.hr i.s { border: 1px solid #000; background: #eceff1; color: #999; font-size: 16px; line-height: 26px; text-align: center; position: relative; overflow: hidden; }
.hr.cut i { margin-bottom: 0; border-bottom: 0; }
.hr.tail i.s { border-top: 0; }
.resizer { height: 31px; flex: none; background: #e0e0e0; border-top: 1px solid #b6b6b6; display: flex; justify-content: flex-end; align-items: flex-start; padding: 12px 4px 0 0; }
.resizer i { border-style: solid; border-width: 0 0 11px 10px; border-color: transparent transparent #777 transparent; }

.help { padding: 4px 0 0 10px; line-height: 19.6px; white-space: nowrap; font-size: 14px; letter-spacing: .025px; }
.help p { margin: 0 0 11.300px; }
.help ul, .help ol { margin: 0; padding: 0; }
.help > ol, .help > ul { padding-left: 18px; margin-bottom: 11.400px; }
.steps li + li { margin-top: .3px; }
.loose { letter-spacing: .07px; }
.help .disc { margin-top: 12px; margin-bottom: 12px; }
.disc li + li { margin-top: 2.700px; }
.help ul { list-style: none; }
.help ul > li::before { content: ""; display: inline-block; vertical-align: 2px; width: 7px; height: 7px; }
.disc > li::before { margin: 0 6px 0 -13px; border-radius: 50%; background: #111; }
.ring > li::before { margin: 0 6px 0 -13px; border-radius: 50%; border: 1px solid #222; }
.sq > li::before { margin: 0 7px 0 -14px; background: #111; }
.help .ring { padding: 5px 0 0 28px; }
.ring > li + li { margin-top: 2.900px; }
.help .ring p { margin-left: 10px; }
.help .ring p.first { margin-top: 2.400px; }
.ring > li:not(:last-child) > .end { margin-bottom: 14px; }
.help ol > li > p { margin-left: 10px; }
.help ol > li > .ring { padding-bottom: 1.500px; }
.help ol > li > .ring + p.after { margin-top: 3.200px; }
.help .sq { padding-left: 44px; margin: 12px 0 3.800px; }
.sq li + li { margin-top: 2.600px; }
.help .ic { margin: -6px 0 0; vertical-align: baseline; }
.help .ic.low { vertical-align: -4px; margin: -4px 0 0; }
.red { color: #f00; }
code { font-family: Roboto, sans-serif; font-weight: 700; background: #ffe57f; border-radius: 4px; padding: 1px 8px 2px; text-shadow: 0 1px 0 #fff; }

.inline-group { margin-top: 30px; }
.inline-group h2 { margin: 0; height: 32px; line-height: 33px; background: #fc0; border-radius: 15px 15px 0 0; padding-left: 8px; font-size: 13px; font-weight: 500; letter-spacing: .5px; text-transform: uppercase; text-shadow: 0 1px 0 #fff; }
.thead { display: grid; grid-template-columns: 471px 295px 518px 1fr; height: 32px; line-height: 33px; border-top: 1px solid #eee; background: #ccc; padding-left: 10px; font-size: 11px; font-weight: 700; text-transform: uppercase; text-shadow: 0 1px 0 #fff; }
.add { height: 34px; display: flex; align-items: center; gap: 5px; padding-left: 11px; background: #f8f8f8; border-bottom: 1px solid #eee; font-size: 12px; font-weight: 700; }
```
FILE: hall.js
```js
// Each row: [height, [[first column, first seat number, seat count], ...], class]
const A = [[0, 26, 13], [17, 13, 13]];
const B = [[0, 28, 14], [16, 14, 14]];
const C = [[3, 22, 11], [16, 11, 11]];
const rows = [
  [21, []], [26, A], [25, A],
  [25, B], [25, B], [25, B], [26, B], [18, B, 'cut'],
  [4, C, 'tail'],
  [26, C], [25, C], [25, C], [25, C], [25, C], [26, C], [25, C], [25, C],
  [22, []], [25, C], [26, [[3, 24, 24]]]
];
const hall = document.getElementById('hall');
for (const [h, groups, cls] of rows) {
  const row = document.createElement('div');
  row.className = 'hr ' + (cls || '');
  row.style.height = h + 'px';
  row.style.gridTemplateRows = h + 'px';
  const seats = {};
  for (const [col, num, n] of groups) for (let k = 0; k < n; k++) seats[col + k] = num - k;
  for (let c = 0; c < 30; c++) {
    const cell = document.createElement('i');
    if (seats[c]) {
      cell.className = 's';
      if (cls !== 'tail') cell.textContent = seats[c];
    }
    row.appendChild(cell);
  }
  hall.appendChild(row);
}
```
